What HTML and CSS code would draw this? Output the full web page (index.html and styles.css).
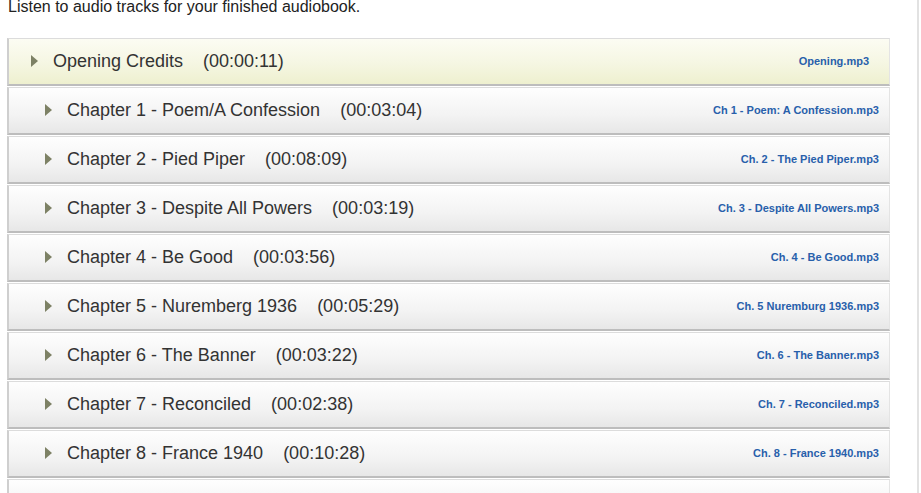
FILE: index.html
```html
<!DOCTYPE html>
<html>
<head>
<meta charset="utf-8">
<link rel="stylesheet" href="styles.css">
</head>
<body>
<div class="page">
  <p class="intro">Listen to audio tracks for your finished audiobook.</p>
  <ul class="tracks">
    <li class="track track-opening">
      <span class="tri"></span>
      <span class="title">Opening Credits</span><span class="dur">(00:00:11)</span>
      <a class="file" href="#">Opening.mp3</a>
    </li>
    <li class="track">
      <span class="tri"></span>
      <span class="title">Chapter 1 - Poem/A Confession</span><span class="dur">(00:03:04)</span>
      <a class="file" href="#">Ch 1 - Poem: A Confession.mp3</a>
    </li>
    <li class="track">
      <span class="tri"></span>
      <span class="title">Chapter 2 - Pied Piper</span><span class="dur">(00:08:09)</span>
      <a class="file" href="#">Ch. 2 - The Pied Piper.mp3</a>
    </li>
    <li class="track">
      <span class="tri"></span>
      <span class="title">Chapter 3 - Despite All Powers</span><span class="dur">(00:03:19)</span>
      <a class="file" href="#">Ch. 3 - Despite All Powers.mp3</a>
    </li>
    <li class="track">
      <span class="tri"></span>
      <span class="title">Chapter 4 - Be Good</span><span class="dur">(00:03:56)</span>
      <a class="file" href="#">Ch. 4 - Be Good.mp3</a>
    </li>
    <li class="track">
      <span class="tri"></span>
      <span class="title">Chapter 5 - Nuremberg 1936</span><span class="dur">(00:05:29)</span>
      <a class="file" href="#">Ch. 5 Nuremburg 1936.mp3</a>
    </li>
    <li class="track">
      <span class="tri"></span>
      <span class="title">Chapter 6 - The Banner</span><span class="dur">(00:03:22)</span>
      <a class="file" href="#">Ch. 6 - The Banner.mp3</a>
    </li>
    <li class="track">
      <span class="tri"></span>
      <span class="title">Chapter 7 - Reconciled</span><span class="dur">(00:02:38)</span>
      <a class="file" href="#">Ch. 7 - Reconciled.mp3</a>
    </li>
    <li class="track">
      <span class="tri"></span>
      <span class="title">Chapter 8 - France 1940</span><span class="dur">(00:10:28)</span>
      <a class="file" href="#">Ch. 8 - France 1940.mp3</a>
    </li>
    <li class="track"></li>
  </ul>
</div>
</body>
</html>
```

FILE: styles.css
```css
html, body {
  margin: 0;
  padding: 0;
  background: #ffffff;
  overflow: hidden;
}

.page {
  width: 919px;
  height: 493px;
  box-sizing: border-box;
  border-right: 2px solid #e2e2e2;
  padding-left: 7px;
  font-family: "Liberation Sans", Arial, sans-serif;
  color: #333333;
  overflow: hidden;
}

.intro {
  margin: -2px 0 0 1px;
  font-size: 16px;
  line-height: 18px;
  color: #222222;
}

.tracks {
  list-style: none;
  margin: 22px 0 0 0;
  padding: 0;
  width: 883px;
}

.track {
  display: flex;
  align-items: center;
  height: 45px;
  margin-bottom: 1px;
  padding: 0 10px 0 36px;
  border-top: 1px solid #dcdcdc;
  border-right: 1px solid #e4e4e4;
  border-bottom: 2px solid #bdbdbd;
  border-left: 2px solid #cfcfcf;
  background: linear-gradient(to bottom, #fefefe 0%, #f3f3f3 60%, #e7e7e7 100%);
}

.track-opening {
  padding: 0 20px 0 22px;
  background: linear-gradient(to bottom, #fcfcf3 0%, #f5f6e2 55%, #eef0cf 100%);
}

.tri {
  width: 0;
  height: 0;
  margin-top: -2px;
  border-top: 6px solid transparent;
  border-bottom: 6px solid transparent;
  border-left: 7px solid #7d8165;
  margin-right: 15px;
}

.title,
.dur {
  font-size: 18px;
  line-height: 22px;
  margin-top: -2px;
  color: #333333;
}

.dur {
  margin-left: 20px;
}

.file {
  margin-left: auto;
  margin-top: -2px;
  font-size: 11px;
  font-weight: bold;
  color: #2860ab;
  text-decoration: none;
}
```
